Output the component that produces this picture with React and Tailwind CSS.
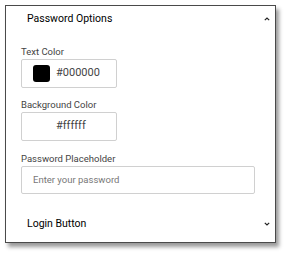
import React from "react";

function Chevron({ up }) {
  return (
    <svg width="6" height="4" viewBox="0 0 6 4" className="block">
      <path
        d={up ? "M0.8 3.2 L3 1 L5.2 3.2" : "M0.8 0.8 L3 3 L5.2 0.8"}
        fill="none"
        stroke="#222"
        strokeWidth="1.2"
      />
    </svg>
  );
}

export default function App() {
  return (
    <div className="w-[288px] h-[256px] bg-white" style={{ fontFamily: "Roboto, 'Liberation Sans', sans-serif" }}>
      <div className="ml-[5px] pt-[5px]">
        <div className="w-[271px] h-[238px] border border-[#4a4a4a] bg-white shadow-[3px_4px_4px_rgba(0,0,0,0.4)] flex flex-col">
          <div className="h-[26px] flex items-center justify-between pl-[21px] pr-[5px]">
            <span className="text-[10.5px] font-normal text-black">Password Options</span>
            <Chevron up />
          </div>
          <div className="pl-[15px] pt-[14px] flex flex-col">
            <div className="text-[9.5px] leading-[12px] text-[#444]">Text Color</div>
            <div className="mt-[1px] w-[96px] h-[29px] border border-[#d0d0d0] rounded-[2px] flex items-center pl-[11px] gap-[6px]">
              <div className="w-[17px] h-[17px] bg-black rounded-[3px]" />
              <span className="text-[11px] text-[#444]">#000000</span>
            </div>
            <div className="mt-[11px] text-[9.5px] leading-[12px] text-[#444]">Background Color</div>
            <div className="mt-[1px] w-[96px] h-[29px] border border-[#d0d0d0] rounded-[2px] flex items-center pl-[11px] gap-[6px]">
              <div className="w-[17px] h-[17px] bg-white rounded-[3px]" />
              <span className="text-[11px] text-[#444]">#ffffff</span>
            </div>
            <div className="mt-[12px] text-[9.5px] leading-[12px] text-[#444]">Password Placeholder</div>
            <div className="mt-[1px] w-[234px] h-[28px] border border-[#d0d0d0] rounded-[2px] flex items-center pl-[11px]">
              <span className="text-[9.5px] text-[#777]">Enter your password</span>
            </div>
          </div>
          <div className="mt-[17px] h-[26px] flex items-center justify-between pl-[21px] pr-[5px]">
            <span className="text-[10.5px] font-normal text-black">Login Button</span>
            <Chevron />
          </div>
        </div>
      </div>
    </div>
  );
}
